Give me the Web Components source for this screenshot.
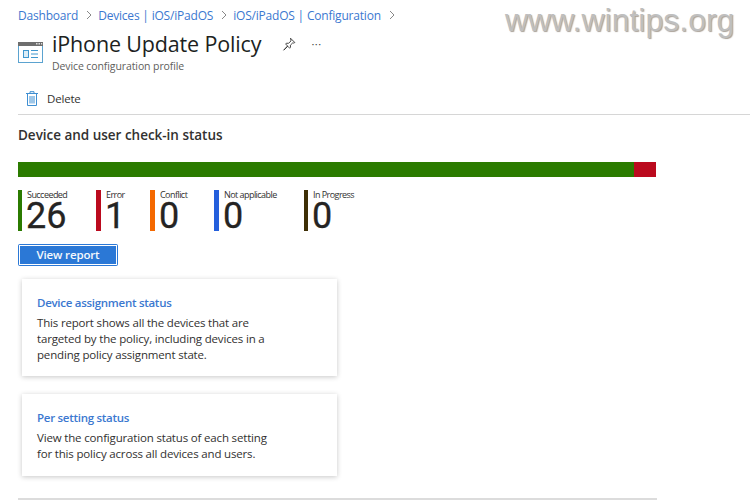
<!DOCTYPE html>
<html>
<head>
<meta charset="utf-8">
<title>iPhone Update Policy</title>
<style>
  html, body { margin: 0; background: #fff; }
  body { width: 750px; height: 504px; overflow: hidden; position: relative;
    font-family: "Open Sans", "Noto Sans", sans-serif; color: #252423; }
  .page { padding-left: 18px; display: flex; flex-direction: column; }
</style>
</head>
<body>
<water-mark>www.wintips.org</water-mark>
<div class="page">
  <bread-crumbs>
    <a>Dashboard</a>
    <a>Devices | iOS/iPadOS</a>
    <a>iOS/iPadOS | Configuration</a>
  </bread-crumbs>
  <page-header>
    <span slot="title">iPhone Update Policy</span>
    <span slot="sub">Device configuration profile</span>
  </page-header>
  <tool-bar>Delete</tool-bar>
  <check-status>Device and user check-in status</check-status>
  <report-card style="--top:13px; --h:97px">
    <span slot="title">Device assignment status</span>
    This report shows all the devices that are<br>targeted by the policy, including devices in a<br>pending policy assignment state.
  </report-card>
  <report-card style="--top:18px; --h:82px">
    <span slot="title">Per setting status</span>
    View the configuration status of each setting<br>for this policy across all devices and users.
  </report-card>
  <bottom-rule></bottom-rule>
</div>

<script>
class WaterMark extends HTMLElement {
  constructor() {
    super()
    this.attachShadow({ mode: "open" })
    this.shadowRoot.innerHTML = `
    <style>
    :host {
      position: absolute; top: 0; left: 505px;
      font: 32px/40px "Liberation Sans", sans-serif;
      color: #bfbfbf;
      text-shadow: 1px 1px 1px rgba(125,112,98,.65);
      white-space: nowrap;
    }
    </style>
    <slot></slot>`
  }
}
customElements.define("water-mark", WaterMark)

class BreadCrumbs extends HTMLElement {
  constructor() {
    super()
    this.attachShadow({ mode: "open" })
    this.shadowRoot.innerHTML = `
    <style>
    :host { display: flex; align-items: center; height: 30px; margin-bottom: 1px; font-size: 12px; color: #3b78d0; letter-spacing: -0.2px; white-space: nowrap; }
    svg { margin: 0 6px 0 8px; flex: none; }
    </style>
    <div id="items" style="display:flex;align-items:center"></div>`
    const box = this.shadowRoot.querySelector("#items")
    this.querySelectorAll("a").forEach((a, i) => {
      const s = document.createElement("span")
      s.textContent = a.textContent
      box.appendChild(s)
      box.insertAdjacentHTML("beforeend", `<svg width="6" height="10" viewBox="0 0 6 10"><path d="M1 1l4 4-4 4" fill="none" stroke="#6a6a6a" stroke-width=".8"/></svg>`)
    })
  }
}
customElements.define("bread-crumbs", BreadCrumbs)

class PageHeader extends HTMLElement {
  constructor() {
    super()
    this.attachShadow({ mode: "open" })
    this.shadowRoot.innerHTML = `
    <style>
    :host { display: flex; height: 45px; }
    .icon { flex: none; margin: 10px 9px 0 0; }
    .text { display: flex; flex-direction: column; }
    .top { display: flex; align-items: center; height: 26px; }
    .name { font-size: 21.5px; line-height: 26px; color: #201f1e; letter-spacing: -0.15px; white-space: nowrap; }
    .sub { font-size: 10.5px; line-height: 14px; margin-top: 2px; color: #605e5c; letter-spacing: -0.1px; }
    .pin { margin-left: 21px; }
    .more { margin-left: 15px; font-size: 11px; line-height: 10px; letter-spacing: .5px; color: #444; }
    </style>
    <svg class="icon" width="25" height="24" viewBox="0 0 25 24">
      <rect x=".5" y="1.5" width="24" height="20" fill="#fff" stroke="#5ba3d0"/>
      <rect x="0" y="1" width="25" height="4" fill="#6e6e6e"/>
      <rect x="18" y="2" width="1.5" height="1.5" fill="#ddd"/><rect x="20.5" y="2" width="1.5" height="1.5" fill="#ddd"/><rect x="23" y="2" width="1.2" height="1.5" fill="#ddd"/>
      <rect x="5.5" y="9.5" width="5" height="7" fill="#dcedf7" stroke="#3f97cf"/>
      <path d="M13 9.5h7M13 13h7M13 16.5h7" stroke="#3f97cf" fill="none"/>
    </svg>
    <div class="text">
      <div class="top">
        <span class="name"><slot name="title"></slot></span>
        <svg class="pin" width="14" height="14" viewBox="0 0 14 14"><path d="M8.5 1.2l4.3 4.3-1 .6-1-.3-2.4 2.4.1 2.2-.8.8-2-2-4 4 3.9-4.2-2-2 .8-.8 2.2.1 2.4-2.4-.2-1z" fill="none" stroke="#333" stroke-width=".9"/></svg>
        <span class="more">···</span>
      </div>
      <div class="sub"><slot name="sub"></slot></div>
    </div>`
  }
}
customElements.define("page-header", PageHeader)

class ToolBar extends HTMLElement {
  constructor() {
    super()
    this.attachShadow({ mode: "open" })
    this.shadowRoot.innerHTML = `
    <style>
    :host { display: flex; align-items: center; height: 32px; padding-top: 6px; border-bottom: 1px solid #d6d6d6; font-size: 11.5px; color: #323130; letter-spacing: -0.18px; box-sizing: content-box; }
    svg { margin: 0 9px 0 8px; }
    </style>
    <svg width="12" height="15" viewBox="0 0 12 15">
      <path d="M0 2.5h12M4 2.5V.7h4v1.8M1.5 2.5v12h9v-12M4 5v7.5M6 5v7.5M8 5v7.5" fill="none" stroke="#3f8fd2" stroke-width="1"/>
    </svg>
    <slot></slot>`
  }
}
customElements.define("tool-bar", ToolBar)

class StatusTile extends HTMLElement {
  constructor() {
    super()
    this.attachShadow({ mode: "open" })
    const color = this.getAttribute("color")
    this.shadowRoot.innerHTML = `
    <style>
    :host { display: flex; height: 41px; width: var(--w); box-sizing: border-box; border-left: var(--b, 5px) solid ${color}; padding-left: 5px; flex: none; }
    .inner { display: flex; flex-direction: column; }
    .lab { font-size: 9px; line-height: 10px; letter-spacing: -0.55px; color: #323130; white-space: nowrap; }
    .num { font-size: 36px; line-height: 33px; margin-left: -1px; color: #252423; -webkit-text-stroke: .3px #252423; font-family: Roboto, "Open Sans", sans-serif; }
    </style>
    <div class="inner">
      <span class="lab">${this.getAttribute("label")}</span>
      <span class="num">${this.getAttribute("value")}</span>
    </div>`
  }
}
customElements.define("status-tile", StatusTile)

class ViewButton extends HTMLElement {
  constructor() {
    super()
    this.attachShadow({ mode: "open" })
    this.shadowRoot.innerHTML = `
    <style>
    :host { display: flex; width: 100px; height: 22px; box-sizing: border-box; background: #2b78d6; border-radius: 2px; padding: 1px; }
    div { flex: 1; border: 1px solid #fff; padding-bottom: 2px; display: flex; align-items: center; justify-content: center; color: #f4f8fd; font-size: 11.5px; font-weight: 600; letter-spacing: -0.15px; }
    </style>
    <div><slot></slot></div>`
  }
}
customElements.define("view-button", ViewButton)

class CheckStatus extends HTMLElement {
  constructor() {
    super()
    this.attachShadow({ mode: "open" })
    this.shadowRoot.innerHTML = `
    <style>
    :host { display: flex; flex-direction: column; }
    h2 { margin: 12px 0 0; height: 16px; font-size: 13.5px; line-height: 16px; font-weight: 600; color: #323130; letter-spacing: -0.02px; white-space: nowrap; }
    .bar { display: flex; width: 638px; height: 15px; margin-top: 19px; }
    .ok { flex: 616; background: #2b7b00; }
    .err { flex: 22; background: #bb0a1e; }
    .tiles { display: flex; margin-top: 13px; }
    view-button { margin-top: 13px; }
    </style>
    <h2><slot></slot></h2>
    <div class="bar"><div class="ok"></div><div class="err"></div></div>
    <div class="tiles">
      <status-tile color="#2b7b00" label="Succeeded" value="26" style="--w:78px;--b:4px"></status-tile>
      <status-tile color="#bb0a1e" label="Error" value="1" style="--w:54px"></status-tile>
      <status-tile color="#f46800" label="Conflict" value="0" style="--w:64px"></status-tile>
      <status-tile color="#245fdc" label="Not applicable" value="0" style="--w:90px"></status-tile>
      <status-tile color="#3e2f06" label="In Progress" value="0" style="--w:80px;--b:4px"></status-tile>
    </div>
    <view-button>View report</view-button>`
  }
}
customElements.define("check-status", CheckStatus)

class ReportCard extends HTMLElement {
  constructor() {
    super()
    this.attachShadow({ mode: "open" })
    this.shadowRoot.innerHTML = `
    <style>
    :host { display: block; box-sizing: border-box; width: 315px; height: var(--h); margin: var(--top) 0 0 4px; padding: 15px 15px 0; background: #fff; box-shadow: 0 1px 5px rgba(0,0,0,.22); font-size: 11.5px; line-height: 16px; color: #323130; letter-spacing: -0.17px; white-space: nowrap; }
    .t { color: #3b78d0; font-size: 11.5px; line-height: 18px; font-weight: 600; letter-spacing: -0.28px; margin-bottom: 3px; }
    </style>
    <div class="t"><slot name="title"></slot></div>
    <slot></slot>`
  }
}
customElements.define("report-card", ReportCard)

class BottomRule extends HTMLElement {
  constructor() {
    super()
    this.attachShadow({ mode: "open" })
    this.shadowRoot.innerHTML = `
    <style>
    :host { display: block; width: 639px; height: 2px; margin-top: 22px; background: #dcdcdc; }
    </style>`
  }
}
customElements.define("bottom-rule", BottomRule)
</script>
</body>
</html>
